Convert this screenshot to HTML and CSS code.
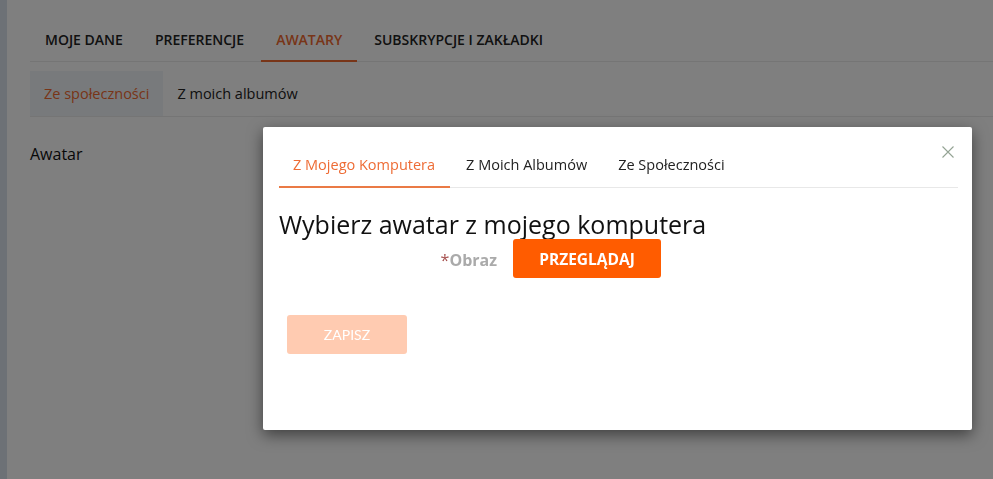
FILE: index.html
```html
<!DOCTYPE html>
<html lang="pl">
<head>
  <meta charset="UTF-8" />
  <title>Awatary</title>
  <meta name="viewport" content="width=device-width, initial-scale=1.0" />
  <link rel="stylesheet" href="styles.css">
</head>
<body>
  <div class="page">
    <div class="sidebar"></div>
    <div class="main">
      <ul class="nav">
        <li>Moje dane</li>
        <li>Preferencje</li>
        <li class="active">Awatary</li>
        <li>Subskrypcje i zakładki</li>
      </ul>
      <ul class="subnav">
        <li class="active">Ze społeczności</li>
        <li>Z moich albumów</li>
      </ul>
      <h3 class="section-title">Awatar</h3>
    </div>
  </div>

  <div class="backdrop"></div>

  <div class="modal">
    <button class="close" aria-label="Zamknij">
      <svg width="12" height="12" viewBox="0 0 12 12"><path d="M0.5 0.5 L11.5 11.5 M11.5 0.5 L0.5 11.5" stroke="#94a394" stroke-width="1.1" fill="none"/></svg>
    </button>
    <ul class="modal-tabs">
      <li class="active">Z Mojego Komputera</li>
      <li>Z Moich Albumów</li>
      <li>Ze Społeczności</li>
    </ul>
    <h2 class="modal-title">Wybierz awatar z mojego komputera</h2>
    <div class="form-row">
      <label class="form-label"><span class="req">*</span>Obraz</label>
      <button class="btn-browse">Przeglądaj</button>
    </div>
    <button class="btn-save" disabled>Zapisz</button>
  </div>
</body>
</html>
```

FILE: styles.css
```css
body {
  margin: 0;
  font-family: "Open Sans", sans-serif;
  color: #222;
  background: #fff;
}
ul {
  list-style: none;
  margin: 0;
  padding: 0;
}
.page {
  display: flex;
  min-height: 479px;
}
.sidebar {
  width: 7px;
  background: #dbe3ec;
}
.main {
  flex: 1;
  padding-left: 23px;
  padding-top: 20px;
}
.nav {
  display: flex;
  gap: 2px;
  border-bottom: 1px solid #eaeaea;
}
.nav li {
  padding: 10px 15px 10px;
  font-size: 14px;
  line-height: 20px;
  font-weight: 600;
  text-transform: uppercase;
  color: #222;
  border-bottom: 2px solid transparent;
  margin-bottom: -1px;
}
.nav li.active {
  color: #f06a30;
  border-bottom-color: #f06a30;
}
.subnav {
  display: flex;
  margin-top: 9px;
  border-bottom: 1px solid #eaeaea;
}
.subnav li {
  padding: 0 14px;
  font-size: 14.5px;
  line-height: 45px;
  color: #222;
}
.subnav li.active {
  background: #f0f5f9;
  color: #f06a30;
}
.section-title {
  margin: 26px 0 0;
  font-size: 16px;
  line-height: 22px;
  font-weight: 400;
  color: #111;
}
.backdrop {
  position: fixed;
  inset: 0;
  background: rgba(0, 0, 0, 0.5);
}
.modal {
  position: absolute;
  left: 263px;
  top: 127px;
  width: 709px;
  height: 303px;
  box-sizing: border-box;
  padding: 16px 14px 0 16px;
  background: #fff;
  border-radius: 2px;
  box-shadow: 0 5px 15px rgba(0, 0, 0, 0.5);
}
.close {
  position: absolute;
  right: 18px;
  top: 19px;
  padding: 0;
  border: 0;
  background: none;
  line-height: 0;
}
.modal-tabs {
  display: flex;
  gap: 2px;
  border-bottom: 1px solid #e8e8e8;
}
.modal-tabs li {
  padding: 12px 15px 11px 14px;
  font-size: 14.5px;
  line-height: 20px;
  color: #222;
  border-bottom: 2px solid transparent;
  margin-bottom: -1px;
}
.modal-tabs li.active {
  color: #ee6c35;
  border-bottom-color: #ea7a45;
}
.modal-title {
  margin: 22px 0 0;
  font-size: 25px;
  line-height: 29px;
  font-weight: 400;
  color: #111;
}
.form-row {
  display: flex;
  align-items: center;
}
.form-label {
  width: 218px;
  text-align: right;
  font-size: 16px;
  font-weight: 700;
  color: #aaa;
  padding-top: 3px;
}
.req {
  color: #a6504e;
  font-weight: 400;
}
.btn-browse {
  margin-left: 16px;
  width: 148px;
  height: 39px;
  border: 0;
  border-radius: 3px;
  background: #ff5c00;
  color: #fff;
  font-family: "Open Sans", sans-serif;
  font-size: 15.5px;
  font-weight: 700;
  text-transform: uppercase;
}
.btn-save {
  display: block;
  margin: 37px 0 0 8px;
  width: 120px;
  height: 39px;
  border: 0;
  border-radius: 3px;
  background: #ffcbb1;
  color: #fff;
  font-family: Lato, sans-serif;
  font-size: 14px;
  text-transform: uppercase;
}
```
